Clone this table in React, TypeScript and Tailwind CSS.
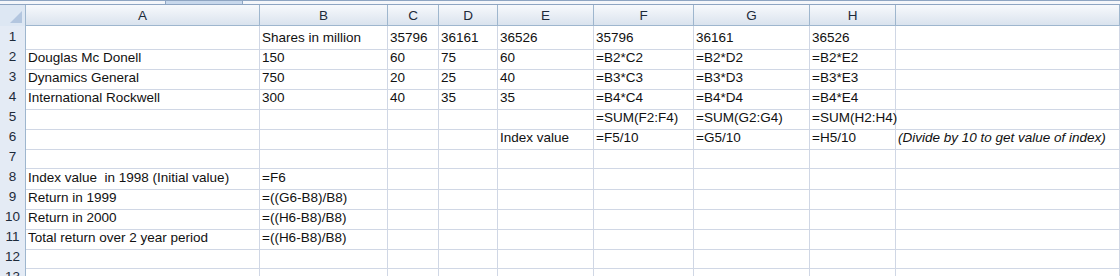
const cols = ['A', 'B', 'C', 'D', 'E', 'F', 'G', 'H', ''];

const rows: string[][] = [
  ['', 'Shares in million', '35796', '36161', '36526', '35796', '36161', '36526', ''],
  ['Douglas Mc Donell', '150', '60', '75', '60', '=B2*C2', '=B2*D2', '=B2*E2', ''],
  ['Dynamics General', '750', '20', '25', '40', '=B3*C3', '=B3*D3', '=B3*E3', ''],
  ['International Rockwell', '300', '40', '35', '35', '=B4*C4', '=B4*D4', '=B4*E4', ''],
  ['', '', '', '', '', '=SUM(F2:F4)', '=SUM(G2:G4)', '=SUM(H2:H4)', ''],
  ['', '', '', '', 'Index value', '=F5/10', '=G5/10', '=H5/10', '(Divide by 10 to get value of index)'],
  [],
  ['Index value  in 1998 (Initial value)', '=F6'],
  ['Return in 1999', '=((G6-B8)/B8)'],
  ['Return in 2000', '=((H6-B8)/B8)'],
  ['Total return over 2 year period', '=((H6-B8)/B8)'],
  [],
  [],
];

const gridCols =
  'grid grid-cols-[26px_234px_128px_51px_59px_96px_100px_116px_86px_1fr]';

export default function App() {
  return (
    <div
      className="w-[1120px] h-[276px] overflow-hidden bg-white text-[13.5px] text-[#111]"
      style={{ fontFamily: '"Liberation Sans", Arial, sans-serif' }}
    >
      {/* sheet strip */}
      <div className="flex h-[5px] border-t border-b border-[#8ea5c2] bg-[#f4f6fa]">
        <div className="w-[165px]" />
        <div className="w-[78px] bg-[#c8d8ec] border-x border-[#8ea5c2]" />
      </div>

      {/* column header */}
      <div className={`${gridCols} h-[21px] border-b border-[#9eb6ce] bg-gradient-to-b from-[#f7f9fc] to-[#dae3ee]`}>
        <div className="relative border-r border-[#9eb6ce] bg-[#dde7f3]">
          <div className="absolute right-[3px] bottom-[3px] w-0 h-0 border-l-[12px] border-l-transparent border-b-[12px] border-b-[#b3c6df]" />
        </div>
        {cols.map((c, i) => (
          <div
            key={i}
            className="border-r border-[#9eb6ce] text-center leading-[21px] text-[#1d2a3a]"
          >
            {c}
          </div>
        ))}
      </div>

      {/* rows */}
      {rows.map((r, ri) => (
        <div key={ri} className={`${gridCols} h-[20px]`}>
          <div className="border-r border-b border-r-[#9eb6ce] border-b-[#c5d3e4] bg-[#e4ebf5] text-center leading-[22px] text-[#1d2a3a]">
            {ri + 1}
          </div>
          {cols.map((_, ci) => (
            <div
              key={ci}
              className={`border-r border-b border-[#d0d7e5] pl-[2px] leading-[23px] whitespace-pre ${
                ci === 8 ? 'italic' : ''
              }`}
            >
              {r[ci] ?? ''}
            </div>
          ))}
        </div>
      ))}
    </div>
  );
}
